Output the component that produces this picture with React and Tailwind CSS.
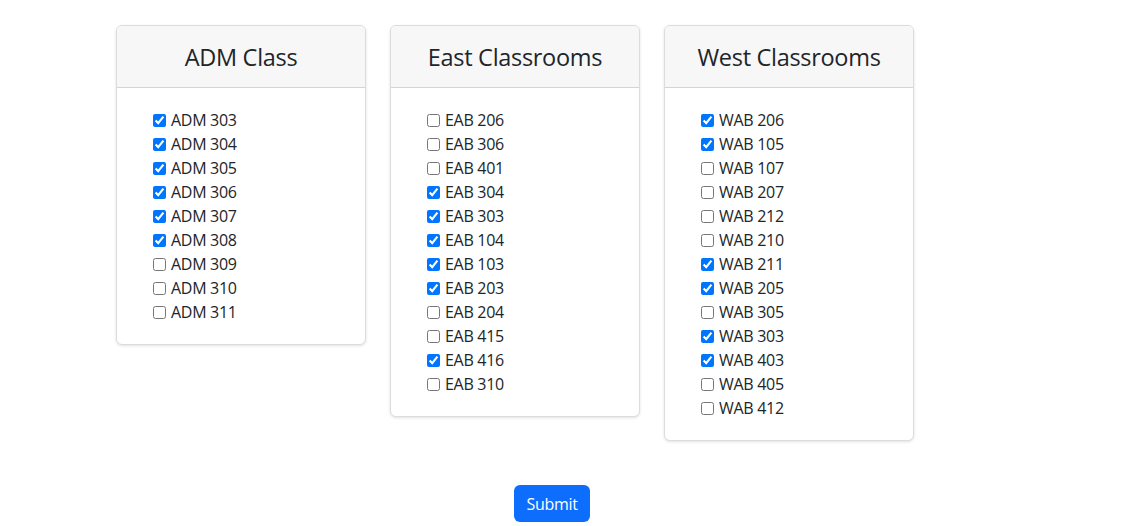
const groups = [
  {
    title: 'ADM Class',
    rooms: [
      ['ADM 303', true], ['ADM 304', true], ['ADM 305', true], ['ADM 306', true], ['ADM 307', true],
      ['ADM 308', true], ['ADM 309', false], ['ADM 310', false], ['ADM 311', false],
    ],
  },
  {
    title: 'East Classrooms',
    rooms: [
      ['EAB 206', false], ['EAB 306', false], ['EAB 401', false], ['EAB 304', true], ['EAB 303', true],
      ['EAB 104', true], ['EAB 103', true], ['EAB 203', true], ['EAB 204', false], ['EAB 415', false],
      ['EAB 416', true], ['EAB 310', false],
    ],
  },
  {
    title: 'West Classrooms',
    rooms: [
      ['WAB 206', true], ['WAB 105', true], ['WAB 107', false], ['WAB 207', false], ['WAB 212', false],
      ['WAB 210', false], ['WAB 211', true], ['WAB 205', true], ['WAB 305', false], ['WAB 303', true],
      ['WAB 403', true], ['WAB 405', false], ['WAB 412', false],
    ],
  },
];

function RoomCard({ title, rooms }) {
  return (
    <div className="w-[250px] rounded-md border border-[#dcdcdc] bg-white shadow-[0_1px_3px_rgba(0,0,0,0.12)] overflow-hidden">
      <div className="h-[62px] pt-[2px] flex items-center justify-center bg-[#f7f7f7] border-b border-[#d4d4d4]">
        <h2 className="text-[23.5px] tracking-[-0.3px] text-[#212529]">{title}</h2>
      </div>
      <div className="pt-[20px] pb-[20px] pl-[36px]">
        {rooms.map(([name, checked]) => (
          <label key={name} className="flex items-center h-[24px] text-[16px] tracking-[-0.3px] text-[#212529]">
            <input type="checkbox" defaultChecked={checked} className="w-[13px] h-[13px] m-0 mr-[5px] accent-[#0075ff]" />
            {name}
          </label>
        ))}
      </div>
    </div>
  );
}

export default function App() {
  return (
    <div className="w-[1136px] h-[526px] bg-white font-['Segoe_UI','Open_Sans','Noto_Sans',sans-serif]">
      <div className="flex items-start gap-[24px] pl-[116px] pt-[25px]">
        {groups.map((g) => (
          <RoomCard key={g.title} title={g.title} rooms={g.rooms} />
        ))}
      </div>
      <div className="flex justify-center mt-[44px] ml-[-32px]">
        <button className="h-[37px] px-[12px] rounded-md bg-[#0d6efd] text-white text-[16px] tracking-[-0.3px]">Submit</button>
      </div>
    </div>
  );
}
